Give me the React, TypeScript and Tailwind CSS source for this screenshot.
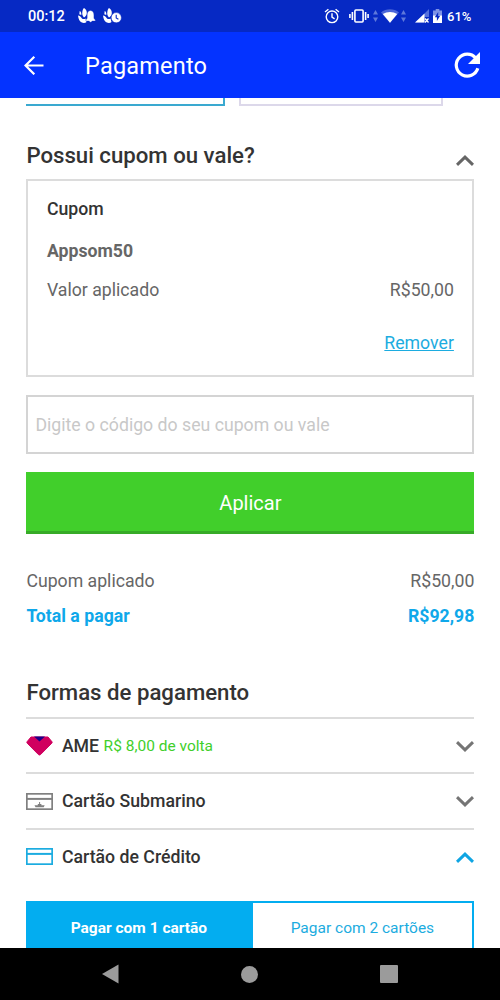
import React from "react";

function Chevron({ up, className }: { up?: boolean; className: string }) {
  return (
    <svg
      width="18"
      height="12"
      viewBox="0 0 18 12"
      fill="none"
      stroke="currentColor"
      strokeWidth="3"
      className={className}
    >
      <path d={up ? "M1 10.8 9 3.1 17 10.8" : "M1 2.2 9 9.9 17 2.2"} />
    </svg>
  );
}

function DataArrows() {
  return (
    <svg width="5" height="12" viewBox="0 0 5 12" fill="#5f78da">
      <path d="M2.5 0 5 4.5H0ZM2.5 12 0 7.5h5Z" />
    </svg>
  );
}

function Flame() {
  return (
    <path d="M6 0C8 1.300 9 3 8.800 5.500 8.600 7.200 7.500 8.600 6 9.500 4.500 8 4 6.200 4.300 4.200 4.500 2.500 5 1 6 0ZM0 7.500C1.500 7.600 2.800 8.500 4 10.500 5 11.200 6.500 11.200 7.500 10.400L8.500 14C7.500 15 5.500 15.300 3.800 14.500 1.500 13.500.5 11 0 7.500ZM1.700 3C3 3.500 3.500 5 3.300 7L1.300 6.200Z" />
  );
}

function StatusBar() {
  return (
    <div className="flex h-8 items-center bg-[#0629c4] pl-7 text-white">
      <span className="w-[50px] pt-[2px] text-[14.500px] leading-[30px] font-medium">00:12</span>
      <svg width="18" height="16" viewBox="0 0 18 16" fill="#fff">
        <Flame />
        <path
          d="M12.500 2.500c-2.500.4-3.300 2.200-3.300 4.500v3.200L7.800 12v1h3.400c.2 1.500 2.600 1.500 2.800 0h3.300v-1l-1.400-1.800V7c0-2.300-.9-4.100-3.400-4.500Z"
          stroke="#0629c4"
          strokeWidth=".3"
        />
      </svg>
      <svg width="19" height="16" viewBox="0 0 19 16" fill="#fff" className="ml-[7px]">
        <Flame />
        <circle cx="13.300" cy="9.700" r="5.100" stroke="#0629c4" strokeWidth=".5" />
        <path d="M13.200 6.800v3.100l2.200 1.300" fill="none" stroke="#0629c4" strokeWidth="1.100" />
      </svg>
      <svg
        width="16"
        height="16"
        viewBox="0 0 16 16"
        fill="none"
        stroke="#fff"
        strokeWidth="1.400"
        className="ml-[202px]"
      >
        <circle cx="8" cy="8.800" r="5.800" />
        <path d="M8 5.200v4l2.600 1.600M1 4l3.400-2.800M15 4l-3.400-2.800" />
      </svg>
      <svg
        width="20"
        height="14"
        viewBox="0 0 20 14"
        fill="none"
        stroke="#fff"
        strokeWidth="1.600"
        className="ml-[9px]"
      >
        <rect x="5.900" y="1" width="8.200" height="12" rx="1" />
        <path d="M3.400 3v8M.9 5v4M16.600 3v8M19.100 5v4" />
      </svg>
      <div className="ml-1 flex items-center gap-[2.500px]">
        <DataArrows />
        <svg width="18" height="14" viewBox="0 0 18 14">
          <path d="M0 3.500C5-.9 13-.9 18 3.500L9 14Z" fill="#4a66d8" />
          <path d="M1.800 5C6 2.200 12 2.200 16.200 5L9 13.800Z" fill="#fff" />
        </svg>
        <DataArrows />
      </div>
      <svg width="14" height="14" viewBox="0 0 14 14" className="ml-[9px]">
        <path d="M14 0v8H9.500v5.500H.5Z" fill="#5570dc" />
        <path d="M9.500 4.500v9H0Z" fill="#fff" />
        <path d="m10 9.500 3.500 4M13.500 9.500l-3.500 4" stroke="#fff" strokeWidth="1.300" />
      </svg>
      <svg width="9" height="14" viewBox="0 0 9 14" className="ml-1">
        <path d="M2.700 0h3.600v1.500H9V7H0V1.500h2.700Z" fill="#7d92e6" />
        <path d="M0 6.500h9V14H0Z" fill="#fff" />
        <path d="M5.200 3 1.800 8.300h2.100V12l3.300-5.300H5.200Z" fill="#0629c4" />
      </svg>
      <span className="ml-[5px] pt-px text-[13px] leading-[31px] font-medium">61%</span>
    </div>
  );
}

function AppBar() {
  return (
    <header className="flex h-[66px] items-center bg-[#0433ff] pr-[19px] pl-6 text-white">
      <svg width="20" height="20" viewBox="0 0 20 20" fill="none" stroke="#fff" strokeWidth="2.200">
        <path d="M19.500 10.500H1.800M10.300 1.700 1.500 10.500l8.800 8.800" />
      </svg>
      <h1 className="ml-[41px] pt-[2px] text-[23.500px] leading-8 tracking-[0.2px]">Pagamento</h1>
      <svg
        width="28"
        height="28"
        viewBox="0 0 28 28"
        fill="none"
        stroke="#fff"
        strokeWidth="3.200"
        className="ml-auto"
      >
        <path d="M22.700 7A11 11 0 1 0 24.800 17.300" />
        <path d="M27 1v12H15Z" fill="#fff" stroke="none" />
      </svg>
    </header>
  );
}

function CardIcon({ boat, className }: { boat?: boolean; className: string }) {
  return (
    <svg
      width="27"
      height="17"
      viewBox="0 0 27 17"
      fill="none"
      stroke="currentColor"
      strokeWidth="1.700"
      className={className}
    >
      <rect x=".85" y=".85" width="25.300" height="15.300" />
      <path d="M1 5.900h25" strokeWidth="2" />
      {boat && (
        <path
          d="M8.500 12.200h3.300v-1.100h1.300V8.900h1v2.200h1.300v1.100h3.300l-1 2H9.500Z"
          fill="currentColor"
          stroke="none"
        />
      )}
    </svg>
  );
}

function AmeIcon() {
  return (
    <svg width="27" height="20" viewBox="0 0 27 20">
      <path
        d="M5 1h17l4 4.800c.3.500.2 1-.2 1.400L14.600 18.500c-.7.700-1.500.7-2.200 0L1.200 7.200C.8 6.800.7 6.300 1 5.800Z"
        fill="#d0005f"
        stroke="#d0005f"
      />
      <path d="M8 .5h11l-5.500 5Z" fill="#1b0088" />
    </svg>
  );
}

type MethodProps = {
  icon: React.ReactNode;
  name: string;
  note?: string;
  open?: boolean;
};

function PaymentMethod({ icon, name, note, open }: MethodProps) {
  return (
    <div className="flex h-[55.300px] items-center border-t-2 border-[#dcdcdc] pt-px">
      {icon}
      <span className="ml-[8.500px] font-medium text-[#333]">{name}</span>
      {note && <span className="ml-[4.500px] text-[15.500px] text-[#41cf2b]">{note}</span>}
      <Chevron up={open} className={open ? "ml-auto text-[#0fa5e3]" : "ml-auto text-[#757575]"} />
    </div>
  );
}

function NavBar() {
  return (
    <nav className="flex h-[52px] items-center justify-between bg-black pr-[102px] pl-[102px]">
      <svg width="17" height="20" viewBox="0 0 17 20" fill="#9b9b9b">
        <path d="M16.500.5v19L0 10Z" />
      </svg>
      <div className="h-[17px] w-[17px] rounded-full bg-[#9b9b9b]" />
      <div className="h-[18px] w-[18px] rounded-[1px] bg-[#9b9b9b]" />
    </nav>
  );
}

export default function App() {
  return (
    <div className="flex h-[1000px] w-[500px] flex-col overflow-hidden bg-white font-[Roboto,sans-serif]">
      <StatusBar />
      <AppBar />
      <main className="h-[850px] overflow-hidden pr-[25.600px] pl-[26.400px] text-[17.700px] leading-6 text-[#666]">
        <div className="flex h-2 gap-[14px]">
          <div className="w-[199px] border-r-2 border-b-2 border-[#3aa9d0]" />
          <div className="w-[204px] border-x-2 border-b-2 border-[#dcd8ea]" />
        </div>

        <section>
          <div className="mt-[33px] flex h-10 items-start justify-between">
            <h2 className="text-[22.200px] leading-8 font-medium text-[#333]">Possui cupom ou vale?</h2>
            <Chevron up className="mt-[15px] text-[#666]" />
          </div>
          <div className="h-[198px] border-2 border-[#dcdcdc] px-[18.500px] pt-4">
            <p className="font-medium text-[#333]">Cupom</p>
            <p className="mt-[18px] font-bold">Appsom50</p>
            <div className="mt-[15px] flex justify-between">
              <span>Valor aplicado</span>
              <span>R$50,00</span>
            </div>
            <div className="mt-[29px] text-right">
              <a className="text-[#1cace0] underline">Remover</a>
            </div>
          </div>
          <input
            className="mt-[18px] block h-[59px] w-full border-2 border-[#d4d4d4] px-[7px] placeholder:text-[#c8c8c8]"
            placeholder="Digite o código do seu cupom ou vale"
          />
          <button className="mt-[18px] block h-[62px] w-full border-b-[3px] border-[#37ab28] bg-[#41cf2b] pt-[2px] text-[20px] text-white">
            Aplicar
          </button>
        </section>

        <section className="mt-[35px]">
          <div className="flex justify-between">
            <span>Cupom aplicado</span>
            <span>R$50,00</span>
          </div>
          <div className="mt-[11px] flex justify-between font-bold text-[#0fa8ea]">
            <span>Total a pagar</span>
            <span>R$92,98</span>
          </div>
        </section>

        <section className="mt-12">
          <h2 className="mb-[9px] text-[22.200px] leading-8 font-medium text-[#333]">Formas de pagamento</h2>
          <PaymentMethod icon={<AmeIcon />} name="AME" note="R$ 8,00 de volta" />
          <PaymentMethod icon={<CardIcon boat className="text-[#808080]" />} name="Cartão Submarino" />
          <PaymentMethod icon={<CardIcon className="text-[#1cace0]" />} name="Cartão de Crédito" open />
          <div className="mt-[18px] flex h-[60px] border-2 border-[#03adf0] text-[15.500px]">
            <button className="w-[225px] bg-[#03adf0] pr-1 pb-[6px] font-bold text-white">Pagar com 1 cartão</button>
            <button className="flex-1 pr-px pb-[6px] text-[#1cace0]">Pagar com 2 cartões</button>
          </div>
        </section>
      </main>
      <NavBar />
    </div>
  );
}
